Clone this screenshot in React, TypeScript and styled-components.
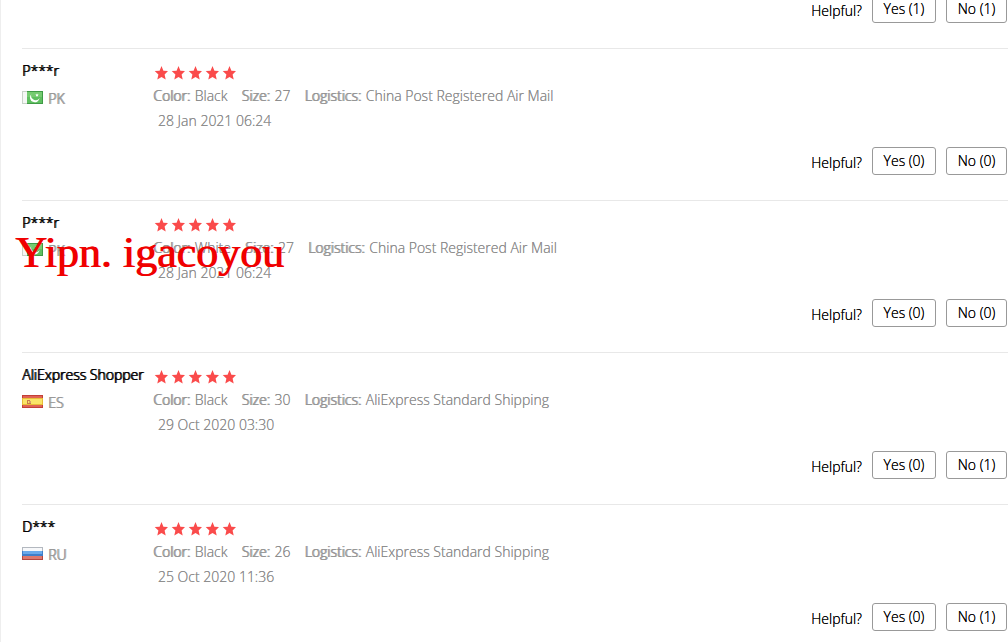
import React from 'react';
import styled, { createGlobalStyle } from 'styled-components';

const GlobalStyle = createGlobalStyle`
  * { box-sizing: border-box; }
  body {
    margin: 0;
    background: #fff;
    color: #000;
    font: 300 14px/20px "Open Sans", "Noto Sans", sans-serif;
    text-shadow: 0 0 0 currentColor;
    overflow: hidden;
  }
`;

const Page = styled.main`
  position: relative;
  padding-left: 21px;
  border-left: 1px solid #eee;
`;

const PreviousReview = styled.section`
  height: 48px;
  display: flex;
  flex-direction: column;
  justify-content: flex-end;
  padding-bottom: 25px;
`;

const Review = styled.article`
  display: flex;
  height: 152px;
  border-top: 1px solid #e8e8e8;
`;

const Author = styled.div`
  flex: 0 0 131px;
  padding-top: 12px;
`;

const Name = styled.h3`
  margin: 0;
  font-size: 14px;
  line-height: 20px;
  font-weight: 300;
  text-shadow: 0 0 0 currentColor, 1px 0 0 currentColor;
  white-space: nowrap;
`;

const Country = styled.div`
  display: flex;
  align-items: center;
  gap: 5px;
  margin-top: 8px;
  color: #999;
  text-shadow: 0 0 0 currentColor, 1px 0 0 currentColor;
  line-height: 20px;

  svg { display: block; margin-bottom: 3px; }
`;

const Feedback = styled.div`
  flex: 1;
  min-width: 0;
  display: flex;
  flex-direction: column;
  padding-top: 17px;
`;

const Stars = styled.div`
  display: flex;
  gap: 3px;
  height: 14px;
  padding-left: 1px;

  svg { display: block; }
`;

const Details = styled.div`
  display: flex;
  gap: 14px;
  margin-top: 6px;
  color: #8c8c8c;
  white-space: nowrap;

  b {
    margin-right: 1px;
    color: #949494;
    font-weight: inherit;
    text-shadow: 0 0 0 currentColor, 1px 0 0 currentColor;
  }
`;

const Posted = styled.time`
  margin: 5px 0 0 5px;
  color: #8c8c8c;
`;

const HelpfulBar = styled.div`
  display: flex;
  justify-content: flex-end;
  margin-top: 16px;
  padding-right: 1px;
`;

const HelpfulLabel = styled.span`
  padding-top: 6px;
`;

const VoteButton = styled.button<{ $wide?: boolean }>`
  width: ${({ $wide }) => ($wide ? 64 : 61)}px;
  height: 28px;
  margin-left: 10px;
  padding: 0;
  border: 1px solid #999;
  border-radius: 3px;
  background: #fff;
  color: #000;
  font: inherit;
  text-shadow: inherit;
  white-space: nowrap;
`;

const Watermark = styled.div`
  position: absolute;
  left: 14px;
  top: 227px;
  color: #f00000;
  font: 400 44px/52px "Liberation Serif", serif;
  text-shadow: 1px 0 0 currentColor;
  white-space: nowrap;
  pointer-events: none;
`;

type CountryCode = 'PK' | 'ES' | 'RU';

function Flag({ code }: { code: CountryCode }) {
  return (
    <svg width="21" height="13" viewBox="0 0 21 13" aria-hidden="true">
      {code === 'PK' && (
        <>
          <rect width="21" height="13" fill="#3f9b45" />
          <rect x="5" y="1" width="15" height="11" fill="#5fbf60" />
          <rect x="5" y="1" width="15" height="5" fill="#75cb70" />
          <rect width="5" height="13" fill="#c9d3c9" />
          <rect x="1" y="1" width="4" height="11" fill="#f5f7f5" />
          <path d="M9.3 3.2A4.8 4.8 0 1 0 17.6 7A4.6 4.6 0 0 1 9.3 3.2Z" fill="#fff" />
          <path d="M15 2.5l.5 1 1.1.1-.8.8.2 1.1-1-.5-1 .5.2-1.1-.8-.8 1.1-.1Z" fill="#fff" />
        </>
      )}
      {code === 'ES' && (
        <>
          <rect width="21" height="13" fill="#c33f37" />
          <rect x="1" y="1" width="19" height="11" fill="#df6255" />
          <rect y="3" width="21" height="7" fill="#e7bd36" />
          <rect x="1" y="4" width="19" height="5" fill="#fae468" />
          <path d="M5 5h3v1H6v2h3v1H5Z" fill="#c77c4a" />
          <path d="M7 6h2v2H7Z" fill="#d9a06c" />
        </>
      )}
      {code === 'RU' && (
        <>
          <rect width="21" height="13" fill="#b3b8bf" />
          <rect x="1" y="1" width="19" height="4" fill="#f7f8fa" />
          <rect y="4" width="21" height="5" fill="#3f7fc9" />
          <rect x="1" y="4" width="19" height="3" fill="#69aaeb" />
          <rect y="9" width="21" height="4" fill="#b4473f" />
          <rect x="1" y="9" width="19" height="3" fill="#dc796e" />
        </>
      )}
    </svg>
  );
}

function Rating() {
  return (
    <Stars role="img" aria-label="5 out of 5 stars">
      {[0, 1, 2, 3, 4].map((n) => (
        <svg key={n} width="14" height="14" viewBox="0 0 14 14">
          <path
            d="M7.5 0L9.4 4.7L14 5.1L10.6 8.5L11.7 13.6L7.5 10.9L3.3 13.6L4.4 8.5L.7 5.1L5.6 4.7Z"
            fill="#fa4b4b"
          />
        </svg>
      ))}
    </Stars>
  );
}

function Helpful({ yes, no }: { yes: number; no: number }) {
  return (
    <HelpfulBar>
      <HelpfulLabel>Helpful?</HelpfulLabel>
      <VoteButton type="button" $wide>Yes ({yes})</VoteButton>
      <VoteButton type="button">No ({no})</VoteButton>
    </HelpfulBar>
  );
}

interface ReviewData {
  name: string;
  country: CountryCode;
  color: string;
  size: string;
  logistics: string;
  date: string;
  no: number;
}

const reviews: ReviewData[] = [
  { name: 'P***r', country: 'PK', color: 'Black', size: '27', logistics: 'China Post Registered Air Mail', date: '28 Jan 2021 06:24', no: 0 },
  { name: 'P***r', country: 'PK', color: 'White', size: '27', logistics: 'China Post Registered Air Mail', date: '28 Jan 2021 06:24', no: 0 },
  { name: 'AliExpress Shopper', country: 'ES', color: 'Black', size: '30', logistics: 'AliExpress Standard Shipping', date: '29 Oct 2020 03:30', no: 1 },
  { name: 'D***', country: 'RU', color: 'Black', size: '26', logistics: 'AliExpress Standard Shipping', date: '25 Oct 2020 11:36', no: 1 },
];

export default function App() {
  return (
    <>
      <GlobalStyle />
      <Page>
        <PreviousReview>
          <Helpful yes={1} no={1} />
        </PreviousReview>
        {reviews.map((r, i) => (
          <Review key={i}>
            <Author>
              <Name>{r.name}</Name>
              <Country>
                <Flag code={r.country} />
                {r.country}
              </Country>
            </Author>
            <Feedback>
              <Rating />
              <Details>
                <span><b>Color:</b> {r.color}</span>
                <span><b>Size:</b> {r.size}</span>
                <span><b>Logistics:</b> {r.logistics}</span>
              </Details>
              <Posted>{r.date}</Posted>
              <Helpful yes={0} no={r.no} />
            </Feedback>
          </Review>
        ))}
        <Watermark>Yipn. igacoyou</Watermark>
      </Page>
    </>
  );
}
